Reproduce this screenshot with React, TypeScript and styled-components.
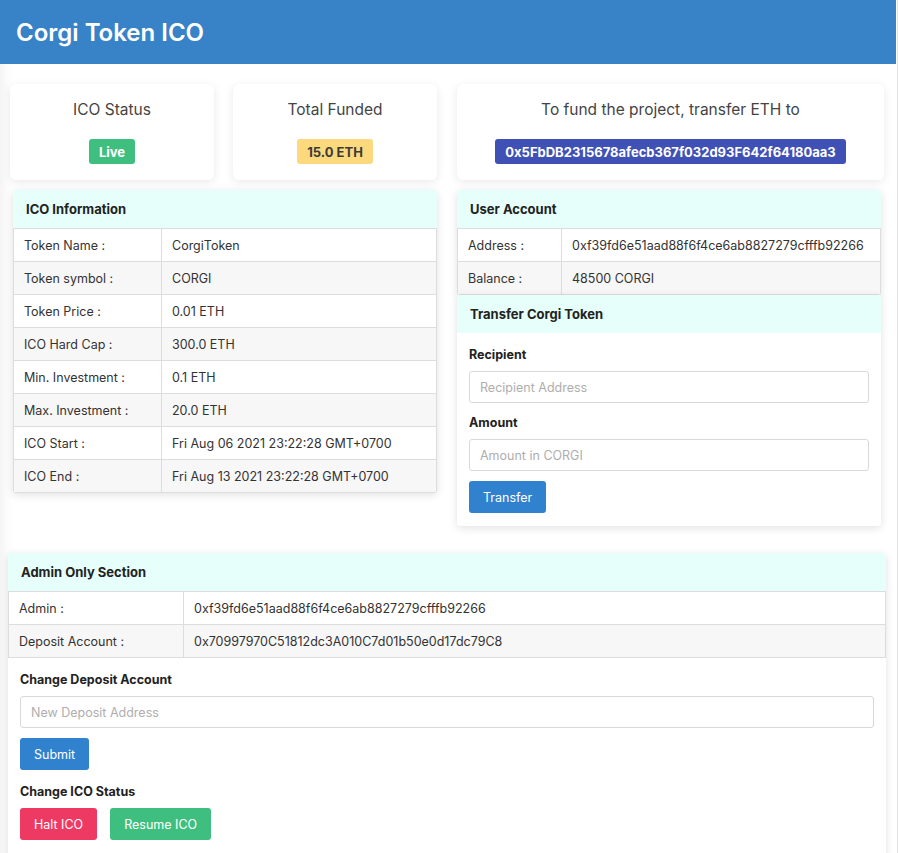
import * as React from "react";
import styled, { createGlobalStyle } from "styled-components";

const GlobalStyle = createGlobalStyle`
  html, body {
    margin: 0;
    padding: 0;
    background: #ffffff;
  }
  body {
    font-family: Inter, "Noto Sans", "Liberation Sans", sans-serif;
    color: #333333;
    -webkit-font-smoothing: antialiased;
  }
  * { box-sizing: border-box; }
`;

const icoInfo: [string, string][] = [
  ["Token Name :", "CorgiToken"],
  ["Token symbol :", "CORGI"],
  ["Token Price :", "0.01 ETH"],
  ["ICO Hard Cap :", "300.0 ETH"],
  ["Min. Investment :", "0.1 ETH"],
  ["Max. Investment :", "20.0 ETH"],
  ["ICO Start :", "Fri Aug 06 2021 23:22:28 GMT+0700"],
  ["ICO End :", "Fri Aug 13 2021 23:22:28 GMT+0700"],
];

const userInfo: [string, string][] = [
  ["Address :", "0xf39fd6e51aad88f6f4ce6ab8827279cfffb92266"],
  ["Balance :", "48500 CORGI"],
];

const adminInfo: [string, string][] = [
  ["Admin :", "0xf39fd6e51aad88f6f4ce6ab8827279cfffb92266"],
  ["Deposit Account :", "0x70997970C51812dc3A010C7d01b50e0d17dc79C8"],
];

export default function App() {
  return (
    <>
      <GlobalStyle />
      <Page>
        <TopBar>
          <Title>Corgi Token ICO</Title>
        </TopBar>
        <Main>
          <StatsRow>
            <StatPair>
              <StatCard>
                <StatLabel>ICO Status</StatLabel>
                <Badge tone="green">Live</Badge>
              </StatCard>
              <StatCard>
                <StatLabel>Total Funded</StatLabel>
                <Badge tone="yellow">15.0 ETH</Badge>
              </StatCard>
            </StatPair>
            <StatCard>
              <StatLabel>To fund the project, transfer ETH to</StatLabel>
              <Badge tone="indigo">0x5FbDB2315678afecb367f032d93F642f64180aa3</Badge>
            </StatCard>
          </StatsRow>

          <InfoRow>
            <Card>
              <CardHeader>ICO Information</CardHeader>
              <InfoTable rows={icoInfo} keyWidth={148} />
            </Card>
            <div>
              <Card>
                <CardHeader>User Account</CardHeader>
                <InfoTable rows={userInfo} keyWidth={104} />
              </Card>
              <Card>
                <CardHeader>Transfer Corgi Token</CardHeader>
                <CardBody>
                  <Label>Recipient</Label>
                  <Input placeholder="Recipient Address" />
                  <Label>Amount</Label>
                  <Input placeholder="Amount in CORGI" />
                  <Button tone="blue">Transfer</Button>
                </CardBody>
              </Card>
            </div>
          </InfoRow>

          <AdminCard>
            <CardHeader>Admin Only Section</CardHeader>
            <InfoTable rows={adminInfo} keyWidth={175} />
            <CardBody>
              <Label>Change Deposit Account</Label>
              <Input placeholder="New Deposit Address" />
              <Button tone="blue">Submit</Button>
              <Label spaced>Change ICO Status</Label>
              <ButtonRow>
                <Button tone="red">Halt ICO</Button>
                <Button tone="green">Resume ICO</Button>
              </ButtonRow>
            </CardBody>
          </AdminCard>
        </Main>
      </Page>
    </>
  );
}

function InfoTable({ rows, keyWidth }: { rows: [string, string][]; keyWidth: number }) {
  return (
    <Table>
      <colgroup>
        <col style={{ width: keyWidth }} />
        <col />
      </colgroup>
      <tbody>
        {rows.map(([k, v]) => (
          <tr key={k}>
            <td>{k}</td>
            <td>{v}</td>
          </tr>
        ))}
      </tbody>
    </Table>
  );
}

const Page = styled.div`
  width: 898px;
  min-height: 853px;
  border-right: 1px solid #e4e4e4;
  box-shadow: inset 14px 0 14px -12px rgba(0, 0, 0, 0.07);
`;

const TopBar = styled.header`
  height: 64px;
  width: 896px;
  background: #3883c8;
  display: flex;
  align-items: center;
  padding: 0 16px;
`;

const Title = styled.h1`
  margin: 0;
  color: #ffffff;
  font-size: 24px;
  font-weight: 600;
`;

const Main = styled.main`
  padding: 20px 0 0 0;
`;

const StatsRow = styled.div`
  display: grid;
  grid-template-columns: 427px 427px;
  column-gap: 20px;
  margin-left: 10px;
`;

const StatPair = styled.div`
  display: grid;
  grid-template-columns: 204px 204px;
  column-gap: 19px;
`;

const StatCard = styled.div`
  height: 96px;
  background: #ffffff;
  border-radius: 6px;
  box-shadow: 0 2px 10px rgba(0, 0, 0, 0.09);
  display: flex;
  flex-direction: column;
  align-items: center;
  padding-top: 14px;
`;

const StatLabel = styled.div`
  font-size: 15.5px;
  line-height: 24px;
  color: #444444;
  margin-bottom: 17px;
`;

const badgeColors: Record<string, [string, string]> = {
  green: ["#3fbf7f", "#ffffff"],
  yellow: ["#fdd97e", "#3a3a3a"],
  indigo: ["#3f51b5", "#ffffff"],
};

const Badge = styled.span<{ tone: "green" | "yellow" | "indigo" }>`
  display: inline-flex;
  align-items: center;
  height: 25px;
  padding: 0 10px;
  border-radius: 3px;
  font-size: 13px;
  font-weight: 700;
  background: ${(p) => badgeColors[p.tone][0]};
  color: ${(p) => badgeColors[p.tone][1]};
`;

const InfoRow = styled.div`
  display: grid;
  grid-template-columns: 424px 424px;
  column-gap: 20px;
  margin: 10px 0 0 13px;
  align-items: start;
`;

const Card = styled.section`
  background: #ffffff;
  border-radius: 3px;
  box-shadow: 0 2px 8px rgba(0, 0, 0, 0.12);
  overflow: hidden;
  position: relative;
`;

const AdminCard = styled(Card)`
  width: 878px;
  margin: 27px 0 0 8px;
  padding-bottom: 10px;
`;

const CardHeader = styled.div`
  height: 38px;
  background: #e6fffa;
  display: flex;
  align-items: center;
  padding: 0 13px;
  font-size: 13px;
  font-weight: 700;
  color: #222222;
`;

const Table = styled.table`
  width: 100%;
  border-collapse: collapse;
  table-layout: fixed;
  font-size: 12.5px;
  color: #333333;

  tr:nth-child(even) td {
    background: #f7f7f7;
  }
  td {
    height: 33px;
    padding: 0 10px;
    border: 1px solid #dddddd;
    white-space: nowrap;
  }
`;

const CardBody = styled.div`
  padding: 12px 12px 13px 12px;
  display: flex;
  flex-direction: column;
  align-items: flex-start;
`;

const Label = styled.div<{ spaced?: boolean }>`
  font-size: 12.5px;
  font-weight: 700;
  color: #222222;
  line-height: 20px;
  margin-top: ${(p) => (p.spaced ? "12px" : "0")};
  margin-bottom: 6px;
`;

const Input = styled.input`
  width: 100%;
  height: 32px;
  border: 1px solid #d9d9d9;
  border-radius: 3px;
  padding: 0 10px;
  font-family: inherit;
  font-size: 12.5px;
  margin-bottom: 10px;
  outline: none;
  &::placeholder {
    color: #aeaeae;
  }
`;

const buttonColors: Record<string, string> = {
  blue: "#3182ce",
  red: "#ee3a62",
  green: "#3fbf7f",
};

const Button = styled.button<{ tone: "blue" | "red" | "green" }>`
  height: 32px;
  padding: 0 14px;
  border: none;
  border-radius: 3px;
  background: ${(p) => buttonColors[p.tone]};
  color: #ffffff;
  font-family: inherit;
  font-size: 12.5px;
`;

const ButtonRow = styled.div`
  display: flex;
  gap: 13px;
`;
